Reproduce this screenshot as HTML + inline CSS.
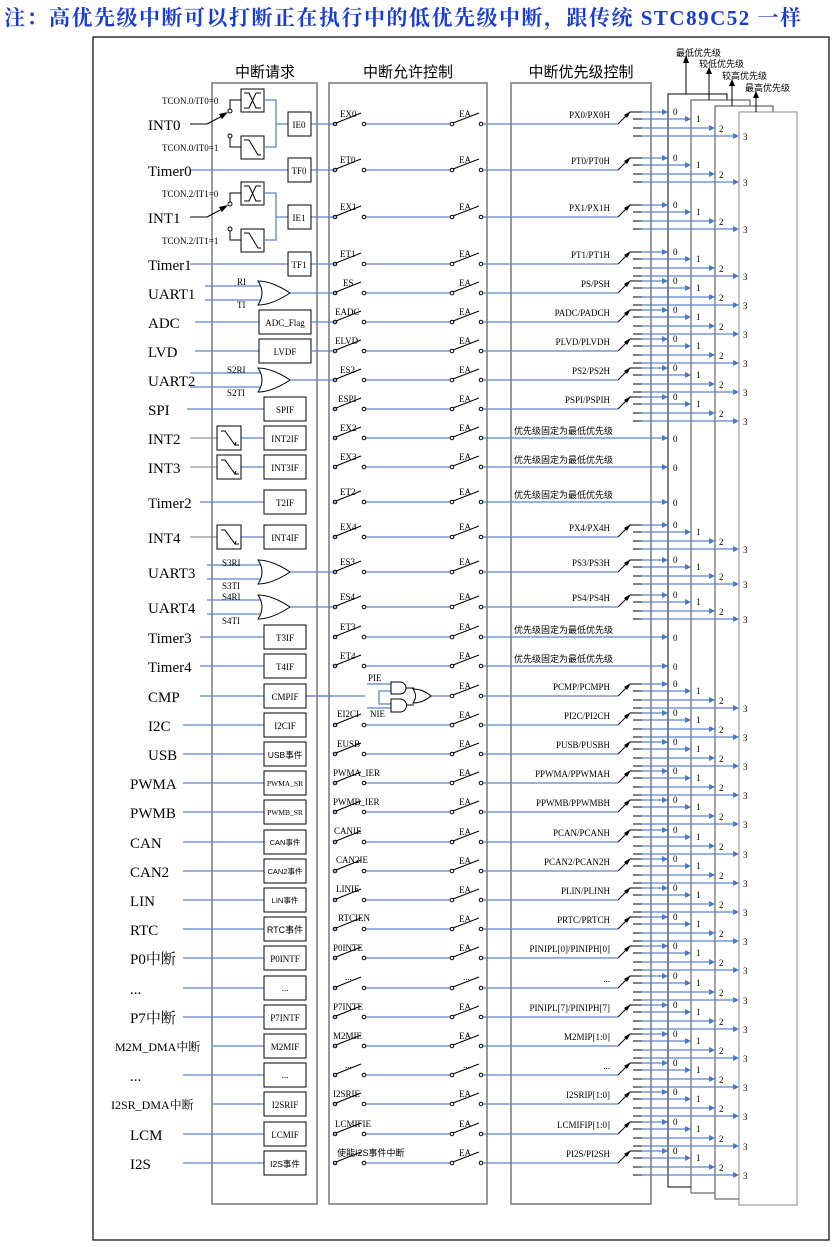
<!DOCTYPE html>
<html><head><meta charset="utf-8"><style>
html,body{margin:0;padding:0;background:#fff;width:837px;height:1247px;overflow:hidden}
svg{display:block}
text{font-family:"Liberation Serif","Noto Serif CJK SC","Noto Sans CJK SC",serif;fill:#000}
.L{font-size:15px}
.s{font-size:9px}
.b{font-size:9px;text-anchor:middle}
.r{font-size:9px;text-anchor:end}
.cj{font-family:"Liberation Sans","Noto Sans CJK SC",sans-serif}
.bl{stroke:#5a84cc;stroke-width:1.3;fill:none}
.k{stroke:#000;stroke-width:1;fill:none}
</style></head><body>
<svg width="837" height="1247" viewBox="0 0 837 1247" xmlns="http://www.w3.org/2000/svg">
<defs>
<g id="en">
<path class="bl" d="M337 0H333M366 0H450M483 0H618"/>
<circle cx="335" cy="0" r="1.8" class="k" fill="#fff"/><path class="k" d="M336 -1L361 -11"/><circle cx="364" cy="0" r="1.8" class="k"/>
<circle cx="452" cy="0" r="1.8" class="k"/><path class="k" d="M453 -1L479 -11"/><circle cx="481" cy="0" r="1.8" class="k"/>
</g>
<g id="p4">
<path class="k" d="M618 0L628 -10"/><path d="M631 -13L624 -9L627 -6Z" fill="#000"/>
<path class="k" d="M630 -12H642M633 -5H642M633 4H642M633 12H642"/>
<path class="bl" d="M642 -12H662M642 -5H685M642 4H709M642 12H733"/>
<path fill="#4a78c8" d="M662 -15L668 -12L662 -9ZM685 -8L691 -5L685 -2ZM709 1L715 4L709 7ZM733 9L739 12L733 15Z"/>
<text class="s" x="673" y="-9">0</text><text class="s" x="696" y="-2">1</text><text class="s" x="719" y="8">2</text><text class="s" x="743" y="16">3</text>
</g>
<g id="fx">
<path class="bl" d="M618 0H662"/><path fill="#4a78c8" d="M662 -3L668 0L662 3Z"/>
<text class="s" x="673" y="4">0</text>
<text class="s cj" x="514" y="-4">优先级固定为最低优先级</text>
</g>
<g id="box"><rect x="264" y="-12" width="42" height="24" fill="#fff" stroke="#000"/></g>
<g id="edge"><rect x="217" y="-12" width="24" height="24" fill="#fff" stroke="#000"/><path class="k" d="M221 -7H225L235 7H239M233 4L235 7L236 4"/></g>
<g id="or"><path d="M258 -12Q272 -12 290 0Q272 12 258 12Q266 0 258 -12Z" fill="#fff" stroke="#000"/><path class="bl" d="M290 0H333"/></g>
</defs>

<text x="4" y="25" style="font-size:21px;letter-spacing:1.5px;font-weight:bold;fill:#1a3ccc;font-family:'Liberation Serif','Noto Serif CJK SC',serif">注：高优先级中断可以打断正在执行中的低优先级中断，跟传统 STC89C52 一样</text>
<rect x="93" y="37" width="736" height="1203" fill="none" stroke="#000" stroke-width="1.2"/>

<text x="265" y="77" style="font-size:15px;text-anchor:middle" class="cj">中断请求</text>
<text x="408" y="77" style="font-size:15px;text-anchor:middle" class="cj">中断允许控制</text>
<text x="581" y="77" style="font-size:15px;text-anchor:middle" class="cj">中断优先级控制</text>
<rect x="212" y="83" width="105" height="1121" fill="none" stroke="#999" stroke-width="2"/>
<rect x="329" y="83" width="158" height="1121" fill="none" stroke="#999" stroke-width="2"/>
<rect x="511" y="83" width="140" height="1121" fill="none" stroke="#999" stroke-width="2"/>

<rect x="668" y="94" width="59" height="1093" fill="#fff" stroke="#000"/>
<rect x="691" y="100" width="59" height="1093" fill="#fff" stroke="#444"/>
<rect x="715" y="106" width="58" height="1093" fill="#fff" stroke="#444"/>
<rect x="739" y="112" width="58" height="1093" fill="#fff" stroke="#888"/>
<path class="k" d="M686 94V62M709 100V73M732 106V85M756 112V97"/>
<path d="M683 63L686 55L689 63ZM706 74L709 67L712 74ZM729 86L732 79L735 86ZM753 98L756 91L759 98Z"/>
<text class="s cj" x="676" y="56">最低优先级</text>
<text class="s cj" x="699" y="67">较低优先级</text>
<text class="s cj" x="722" y="79">较高优先级</text>
<text class="s cj" x="745" y="91">最高优先级</text>

<path class="bl" d="M190 170H288M190 264H288M205 286H262M205 300H262M195 322H260M195 351H260M190 373H262M190 387H262M187 409H264M241 438H264M241 467H264M200 502H264M241 537H264M207 565H262M207 579H262M207 600H262M207 614H262M200 637H264M200 666H264M200 696H365M183 725H264M183 754H264M183 783H264M183 812H264M183 842H264M183 871H264M183 900H264M183 929H264M183 958H264M183 988H264M183 1017H264M212 1046H264M183 1075H264M212 1104H264M183 1134H264M183 1163H264"/>
<path stroke="#777" d="M190 438H217M190 467H217M190 537H217" fill="none"/>

<g>
<path class="k" d="M190 124H207"/><path class="k" d="M207 124L226 114"/><path d="M228 112L219 114L222 119Z"/>
<circle cx="230" cy="111" r="2" class="k"/><circle cx="230" cy="136" r="2" class="k"/>
<path class="k" d="M230 109V100H241M230 138V147H241"/>
<rect x="241" y="89" width="23" height="23" fill="#fff" stroke="#000"/><path class="k" d="M244 93H249L256 108H261M244 108H249L256 93H261"/>
<rect x="241" y="136" width="23" height="23" fill="#fff" stroke="#000"/><path class="k" d="M244 140H249L258 155H261"/>
<path class="bl" d="M264 100H276V147H264M276 124H288M311 124H333"/>
<rect x="288" y="112" width="23" height="24" fill="#fff" stroke="#000"/>
</g>
<g transform="translate(0,93)">
<path class="k" d="M190 124H207"/><path class="k" d="M207 124L226 114"/><path d="M228 112L219 114L222 119Z"/>
<circle cx="230" cy="111" r="2" class="k"/><circle cx="230" cy="136" r="2" class="k"/>
<path class="k" d="M230 109V100H241M230 138V147H241"/>
<rect x="241" y="89" width="23" height="23" fill="#fff" stroke="#000"/><path class="k" d="M244 93H249L256 108H261M244 108H249L256 93H261"/>
<rect x="241" y="136" width="23" height="23" fill="#fff" stroke="#000"/><path class="k" d="M244 140H249L258 155H261"/>
<path class="bl" d="M264 100H276V147H264M276 124H288M311 124H333"/>
<rect x="288" y="112" width="23" height="24" fill="#fff" stroke="#000"/>
</g>
<path class="bl" d="M311 170H333M311 264H333"/>
<rect x="288" y="158" width="23" height="24" fill="#fff" stroke="#000"/>
<rect x="288" y="252" width="23" height="24" fill="#fff" stroke="#000"/>
<text class="s" x="162" y="104">TCON.0/IT0=0</text><text class="s" x="162" y="151">TCON.0/IT0=1</text>
<text class="s" x="162" y="197">TCON.2/IT1=0</text><text class="s" x="162" y="244">TCON.2/IT1=1</text>
<text class="b" x="299" y="128">IE0</text><text class="b" x="299" y="174">TF0</text>
<text class="b" x="299" y="221">IE1</text><text class="b" x="299" y="268">TF1</text>

<use href="#en" y="124"/><use href="#en" y="170"/><use href="#en" y="217"/><use href="#en" y="264"/>
<use href="#en" y="293"/><use href="#en" y="322"/><use href="#en" y="351"/><use href="#en" y="380"/>
<use href="#en" y="409"/><use href="#en" y="438"/><use href="#en" y="467"/><use href="#en" y="502"/>
<use href="#en" y="537"/><use href="#en" y="572"/><use href="#en" y="607"/><use href="#en" y="637"/>
<use href="#en" y="666"/><use href="#en" y="725"/><use href="#en" y="754"/>
<use href="#en" y="783"/><use href="#en" y="812"/><use href="#en" y="842"/><use href="#en" y="871"/>
<use href="#en" y="900"/><use href="#en" y="929"/><use href="#en" y="958"/><use href="#en" y="988"/>
<use href="#en" y="1017"/><use href="#en" y="1046"/><use href="#en" y="1075"/><use href="#en" y="1104"/>
<use href="#en" y="1134"/><use href="#en" y="1163"/>
<path class="bl" d="M306 696H333M431 696H450M483 696H618M367 684H391M367 708H391M391 691H379V704H391"/>
<circle cx="452" cy="696" r="1.8" class="k"/><path class="k" d="M453 695L479 685"/><circle cx="481" cy="696" r="1.8" class="k"/>
<path d="M391 682H400A6 6 0 0 1 400 694H391ZM391 699H400A6.5 6.5 0 0 1 400 712H391Z" fill="#fff" stroke="#000"/>
<path class="k" d="M406 688H414M406 705H414"/>
<path d="M413 689Q423 689 431 696Q423 703 413 703Q418 696 413 689Z" fill="#fff" stroke="#000"/>
<text class="s" x="368" y="681">PIE</text><text class="s" x="370" y="717">NIE</text>

<use href="#or" y="293"/><use href="#or" y="380"/><use href="#or" y="572"/><use href="#or" y="607"/>
<text class="s" x="237" y="285">RI</text><text class="s" x="237" y="308">TI</text>
<text class="s" x="227" y="373">S2RI</text><text class="s" x="227" y="396">S2TI</text>
<text class="s" x="222" y="566">S3RI</text><text class="s" x="222" y="589">S3TI</text>
<text class="s" x="222" y="600">S4RI</text><text class="s" x="222" y="624">S4TI</text>
<use href="#edge" y="438"/><use href="#edge" y="467"/><use href="#edge" y="537"/>

<rect x="259" y="310" width="52" height="24" fill="#fff" stroke="#000"/><text class="b" x="285" y="326">ADC_Flag</text>
<rect x="259" y="339" width="52" height="24" fill="#fff" stroke="#000"/><text class="b" x="285" y="355">LVDF</text>
<path class="bl" d="M311 322H333M311 351H333"/>
<use href="#box" y="409"/><text class="b" x="285" y="413">SPIF</text>
<use href="#box" y="438"/><text class="b" x="285" y="442">INT2IF</text>
<use href="#box" y="467"/><text class="b" x="285" y="471">INT3IF</text>
<use href="#box" y="502"/><text class="b" x="285" y="506">T2IF</text>
<use href="#box" y="537"/><text class="b" x="285" y="541">INT4IF</text>
<use href="#box" y="637"/><text class="b" x="285" y="641">T3IF</text>
<use href="#box" y="666"/><text class="b" x="285" y="670">T4IF</text>
<use href="#box" y="696"/><text class="b" x="285" y="700">CMPIF</text>
<use href="#box" y="725"/><text class="b" x="285" y="729">I2CIF</text>
<use href="#box" y="754"/><text class="b cj" x="285" y="758" style="font-size:8.5px">USB事件</text>
<use href="#box" y="783"/><text class="b" x="285" y="786" style="font-size:7.5px">PWMA_SR</text>
<use href="#box" y="812"/><text class="b" x="285" y="815" style="font-size:7.5px">PWMB_SR</text>
<use href="#box" y="842"/><text class="b cj" x="285" y="845" style="font-size:7.5px">CAN事件</text>
<use href="#box" y="871"/><text class="b cj" x="285" y="874" style="font-size:7.5px">CAN2事件</text>
<use href="#box" y="900"/><text class="b cj" x="285" y="903" style="font-size:7.5px">LIN事件</text>
<use href="#box" y="929"/><text class="b cj" x="285" y="933">RTC事件</text>
<use href="#box" y="958"/><text class="b" x="285" y="962">P0INTF</text>
<use href="#box" y="988"/><text class="b" x="285" y="991">...</text>
<use href="#box" y="1017"/><text class="b" x="285" y="1021">P7INTF</text>
<use href="#box" y="1046"/><text class="b" x="285" y="1050">M2MIF</text>
<use href="#box" y="1075"/><text class="b" x="285" y="1078">...</text>
<use href="#box" y="1104"/><text class="b" x="285" y="1108">I2SRIF</text>
<use href="#box" y="1134"/><text class="b" x="285" y="1138">LCMIF</text>
<use href="#box" y="1163"/><text class="b cj" x="285" y="1167" style="font-size:8.5px">I2S事件</text>

<g>
<text class="L" x="148" y="130">INT0</text><text class="L" x="148" y="176">Timer0</text>
<text class="L" x="148" y="223">INT1</text><text class="L" x="148" y="270">Timer1</text>
<text class="L" x="148" y="299">UART1</text><text class="L" x="148" y="328">ADC</text>
<text class="L" x="148" y="357">LVD</text><text class="L" x="148" y="386">UART2</text>
<text class="L" x="148" y="415">SPI</text><text class="L" x="148" y="444">INT2</text>
<text class="L" x="148" y="473">INT3</text><text class="L" x="148" y="508">Timer2</text>
<text class="L" x="148" y="543">INT4</text><text class="L" x="148" y="578">UART3</text>
<text class="L" x="148" y="613">UART4</text><text class="L" x="148" y="643">Timer3</text>
<text class="L" x="148" y="672">Timer4</text><text class="L" x="148" y="702">CMP</text>
<text class="L" x="148" y="731">I2C</text><text class="L" x="148" y="760">USB</text>
<text class="L" x="130" y="789">PWMA</text><text class="L" x="130" y="818">PWMB</text>
<text class="L" x="130" y="848">CAN</text><text class="L" x="130" y="877">CAN2</text>
<text class="L" x="130" y="906">LIN</text><text class="L" x="130" y="935">RTC</text>
<text class="L" x="130" y="964">P0中断</text><text class="L" x="130" y="994">...</text>
<text class="L" x="130" y="1023">P7中断</text>
<text x="115" y="1051" style="font-size:12px">M2M_DMA中断</text>
<text class="L" x="130" y="1081">...</text>
<text x="111" y="1109" style="font-size:12px">I2SR_DMA中断</text>
<text class="L" x="130" y="1140">LCM</text><text class="L" x="130" y="1169">I2S</text>
</g>

<g>
<text class="s" x="340" y="117">EX0</text><text class="s" x="340" y="163">ET0</text><text class="s" x="340" y="210">EX1</text><text class="s" x="340" y="257">ET1</text>
<text class="s" x="343" y="286">ES</text><text class="s" x="335" y="315">EADC</text><text class="s" x="335" y="344">ELVD</text><text class="s" x="340" y="373">ES2</text>
<text class="s" x="338" y="402">ESPI</text><text class="s" x="340" y="431">EX2</text><text class="s" x="340" y="460">EX3</text><text class="s" x="340" y="495">ET2</text>
<text class="s" x="340" y="530">EX4</text><text class="s" x="340" y="565">ES3</text><text class="s" x="340" y="600">ES4</text><text class="s" x="340" y="630">ET3</text>
<text class="s" x="340" y="659">ET4</text><text class="s" x="337" y="717">EI2CI</text><text class="s" x="337" y="747">EUSB</text>
<text class="s" x="333" y="776">PWMA_IER</text><text class="s" x="333" y="805">PWMB_IER</text><text class="s" x="334" y="834">CANIE</text>
<text class="s" x="336" y="863">CAN2IE</text><text class="s" x="336" y="892">LINIE</text><text class="s" x="338" y="921">RTCIEN</text>
<text class="s" x="333" y="951">P0INTE</text><text class="s" x="345" y="980">...</text><text class="s" x="333" y="1010">P7INTE</text>
<text class="s" x="333" y="1039">M2MIE</text><text class="s" x="333" y="1097">I2SRIE</text><text class="s" x="335" y="1127">LCMIFIE</text>
<text class="s cj" x="337" y="1156">使能I2S事件中断</text>
</g>
<g>
<text class="s" x="459" y="117">EA</text><text class="s" x="459" y="163">EA</text><text class="s" x="459" y="210">EA</text><text class="s" x="459" y="257">EA</text>
<text class="s" x="459" y="286">EA</text><text class="s" x="459" y="315">EA</text><text class="s" x="459" y="344">EA</text><text class="s" x="459" y="373">EA</text>
<text class="s" x="459" y="402">EA</text><text class="s" x="459" y="431">EA</text><text class="s" x="459" y="460">EA</text><text class="s" x="459" y="495">EA</text>
<text class="s" x="459" y="530">EA</text><text class="s" x="459" y="565">EA</text><text class="s" x="459" y="600">EA</text><text class="s" x="459" y="630">EA</text>
<text class="s" x="459" y="659">EA</text><text class="s" x="459" y="689">EA</text><text class="s" x="459" y="718">EA</text><text class="s" x="459" y="747">EA</text>
<text class="s" x="459" y="776">EA</text><text class="s" x="459" y="805">EA</text><text class="s" x="459" y="835">EA</text><text class="s" x="459" y="864">EA</text>
<text class="s" x="459" y="893">EA</text><text class="s" x="459" y="922">EA</text><text class="s" x="459" y="951">EA</text><text class="s" x="463" y="980">...</text>
<text class="s" x="459" y="1010">EA</text><text class="s" x="459" y="1039">EA</text><text class="s" x="463" y="1068">...</text><text class="s" x="459" y="1097">EA</text>
<text class="s" x="459" y="1127">EA</text><text class="s" x="459" y="1156">EA</text>
</g>
<text class="s" x="345" y="1068">...</text>

<use href="#p4" y="124"/><use href="#p4" y="170"/><use href="#p4" y="217"/><use href="#p4" y="264"/>
<use href="#p4" y="293"/><use href="#p4" y="322"/><use href="#p4" y="351"/><use href="#p4" y="380"/>
<use href="#p4" y="409"/><use href="#fx" y="438"/><use href="#fx" y="467"/><use href="#fx" y="502"/>
<use href="#p4" y="537"/><use href="#p4" y="572"/><use href="#p4" y="607"/><use href="#fx" y="637"/>
<use href="#fx" y="666"/><use href="#p4" y="696"/><use href="#p4" y="725"/><use href="#p4" y="754"/>
<use href="#p4" y="783"/><use href="#p4" y="812"/><use href="#p4" y="842"/><use href="#p4" y="871"/>
<use href="#p4" y="900"/><use href="#p4" y="929"/><use href="#p4" y="958"/><use href="#p4" y="988"/>
<use href="#p4" y="1017"/><use href="#p4" y="1046"/><use href="#p4" y="1075"/><use href="#p4" y="1104"/>
<use href="#p4" y="1134"/><use href="#p4" y="1163"/>
<g>
<text class="r" x="610" y="118">PX0/PX0H</text><text class="r" x="610" y="164">PT0/PT0H</text>
<text class="r" x="610" y="211">PX1/PX1H</text><text class="r" x="610" y="258">PT1/PT1H</text>
<text class="r" x="610" y="287">PS/PSH</text><text class="r" x="610" y="316">PADC/PADCH</text>
<text class="r" x="610" y="345">PLVD/PLVDH</text><text class="r" x="610" y="374">PS2/PS2H</text>
<text class="r" x="610" y="403">PSPI/PSPIH</text><text class="r" x="610" y="531">PX4/PX4H</text>
<text class="r" x="610" y="566">PS3/PS3H</text><text class="r" x="610" y="601">PS4/PS4H</text>
<text class="r" x="610" y="690">PCMP/PCMPH</text><text class="r" x="610" y="719">PI2C/PI2CH</text>
<text class="r" x="610" y="748">PUSB/PUSBH</text><text class="r" x="610" y="777">PPWMA/PPWMAH</text>
<text class="r" x="610" y="806">PPWMB/PPWMBH</text><text class="r" x="610" y="836">PCAN/PCANH</text>
<text class="r" x="610" y="865">PCAN2/PCAN2H</text><text class="r" x="610" y="894">PLIN/PLINH</text>
<text class="r" x="610" y="923">PRTC/PRTCH</text><text class="r" x="610" y="952">PINIPL[0]/PINIPH[0]</text>
<text class="r" x="610" y="982">...</text><text class="r" x="610" y="1011">PINIPL[7]/PINIPH[7]</text>
<text class="r" x="610" y="1040">M2MIP[1:0]</text><text class="r" x="610" y="1069">...</text>
<text class="r" x="610" y="1098">I2SRIP[1:0]</text><text class="r" x="610" y="1128">LCMIFIP[1:0]</text>
<text class="r" x="610" y="1157">PI2S/PI2SH</text>
</g>
</svg>
</body></html>
